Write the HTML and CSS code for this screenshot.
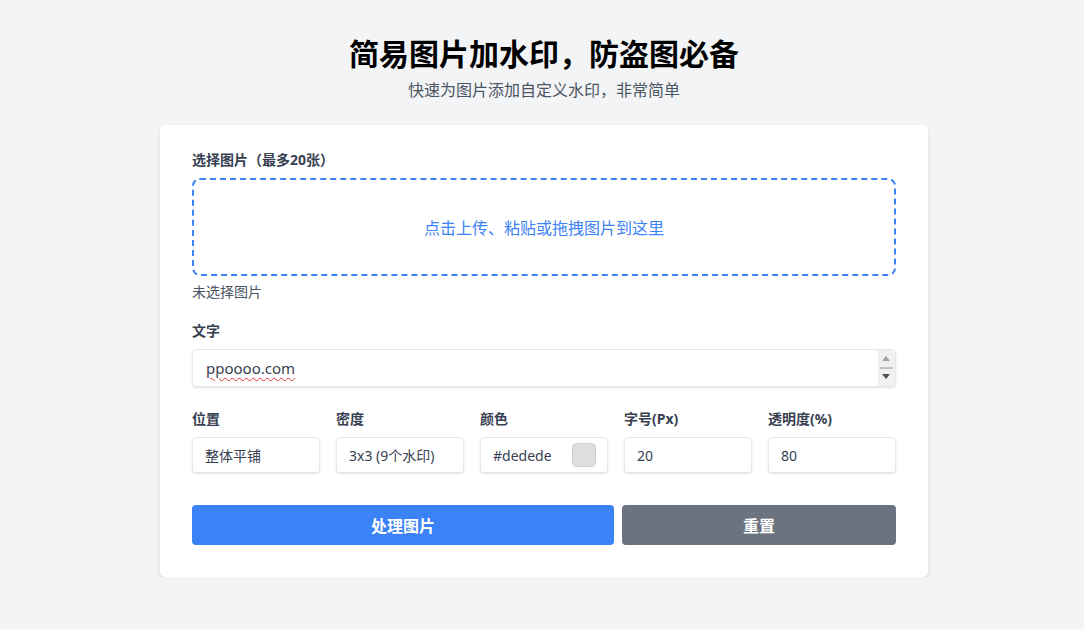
FILE: index.html
```html
<!DOCTYPE html>
<html lang="zh-CN">
<head>
<meta charset="utf-8">
<title>简易图片加水印</title>
<link rel="stylesheet" href="styles.css">
</head>
<body>
<div class="page">
  <h1 class="title">简易图片加水印，防盗图必备</h1>
  <p class="subtitle">快速为图片添加自定义水印，非常简单</p>
  <div class="card">
    <div class="label">选择图片（最多20张）</div>
    <div class="drop">点击上传、粘贴或拖拽图片到这里</div>
    <div class="status">未选择图片</div>

    <div class="label label-gap">文字</div>
    <div class="textbox">
      <span class="textval">ppoooo.com</span>
      <div class="scroll">
        <span class="arrow-up"></span>
        <span class="thumb"></span>
        <span class="arrow-down"></span>
      </div>
    </div>

    <div class="fields">
      <div class="field">
        <div class="label">位置</div>
        <div class="input">整体平铺</div>
      </div>
      <div class="field">
        <div class="label">密度</div>
        <div class="input">3x3 (9个水印)</div>
      </div>
      <div class="field">
        <div class="label">颜色</div>
        <div class="input input-color">#dedede<span class="swatch"></span></div>
      </div>
      <div class="field">
        <div class="label">字号(Px)</div>
        <div class="input">20</div>
      </div>
      <div class="field">
        <div class="label">透明度(%)</div>
        <div class="input">80</div>
      </div>
    </div>

    <div class="actions">
      <button class="btn btn-primary">处理图片</button>
      <button class="btn btn-secondary">重置</button>
    </div>
  </div>
</div>
</body>
</html>
```

FILE: styles.css
```css
* { box-sizing: border-box; }
html, body { margin: 0; padding: 0; }
body {
  background: #f3f4f6;
  font-family: "Noto Sans", "Noto Sans CJK SC", sans-serif;
  color: #374151;
}
.page {
  width: 772px;
  margin: 0 auto;
  padding-top: 34px;
  padding-left: 4px;
}
.title {
  margin: 0;
  font-size: 30px;
  line-height: 36px;
  font-weight: 700;
  color: #000;
  text-align: center;
  font-family: "Noto Sans CJK SC", sans-serif;
}
.subtitle {
  margin: 7px 0 0;
  font-size: 16px;
  line-height: 24px;
  color: #4b5563;
  text-align: center;
  font-family: "Noto Sans CJK SC", sans-serif;
}
.card {
  margin-top: 24px;
  background: #fff;
  border-radius: 6px;
  box-shadow: 0 4px 6px -1px rgba(0,0,0,0.1), 0 2px 4px -2px rgba(0,0,0,0.1);
  padding: 25px 32px 32px;
}
.label {
  font-size: 14px;
  line-height: 20px;
  font-weight: 700;
  color: #374151;
  margin-bottom: 8px;
  font-family: "Noto Sans", "Noto Sans CJK SC", sans-serif;
}
.label-gap { margin-top: 20px; }
.drop {
  height: 98px;
  border: 2px dashed #3b82f6;
  border-radius: 8px;
  display: flex;
  align-items: center;
  justify-content: center;
  color: #3b82f6;
  font-size: 16px;
  font-family: "Noto Sans CJK SC", sans-serif;
}
.status {
  margin-top: 5px;
  font-size: 14px;
  line-height: 20px;
  color: #4b5563;
  font-family: "Noto Sans CJK SC", sans-serif;
}
.textbox {
  position: relative;
  height: 38px;
  border: 1px solid #e5e7eb;
  border-radius: 4px;
  box-shadow: 0 1px 2px rgba(0,0,0,0.12);
  display: flex;
  align-items: center;
  padding-left: 13px;
}
.textval {
  font-size: 15px;
  color: #374151;
  text-decoration: underline wavy #e53935;
  text-decoration-thickness: 1px;
  text-underline-offset: 3px;
}
.scroll {
  position: absolute;
  right: 0;
  top: 0;
  bottom: 0;
  width: 17px;
  background: #f1f1f1;
  border-radius: 0 4px 4px 0;
}
.arrow-up {
  position: absolute;
  left: 4px;
  top: 6px;
  width: 0; height: 0;
  border-left: 4px solid transparent;
  border-right: 4px solid transparent;
  border-bottom: 5px solid #a3a3a3;
}
.thumb {
  position: absolute;
  left: 2px;
  right: 2px;
  top: 17px;
  height: 2px;
  background: #c1c1c1;
}
.arrow-down {
  position: absolute;
  left: 4px;
  bottom: 7px;
  width: 0; height: 0;
  border-left: 4px solid transparent;
  border-right: 4px solid transparent;
  border-top: 5px solid #505050;
}
.fields {
  margin-top: 22px;
  display: grid;
  grid-template-columns: repeat(5, 1fr);
  gap: 16px;
}
.input {
  height: 36px;
  border: 1px solid #e5e7eb;
  border-radius: 4px;
  box-shadow: 0 1px 2px rgba(0,0,0,0.12);
  display: flex;
  align-items: center;
  padding: 0 12px;
  font-size: 14px;
  color: #374151;
  font-family: "Noto Sans", "Noto Sans CJK SC", sans-serif;
}
.input-color { justify-content: space-between; padding-right: 11px; }
.swatch {
  width: 24px;
  height: 24px;
  border-radius: 4px;
  background: #dedede;
  border: 1px solid #cfcfcf;
}
.actions {
  margin-top: 32px;
  display: flex;
  gap: 8px;
}
.btn {
  height: 40px;
  border: none;
  border-radius: 4px;
  color: #fff;
  font-size: 16px;
  font-weight: 700;
  font-family: "Noto Sans CJK SC", sans-serif;
  cursor: pointer;
}
.btn-primary { flex: 1; background: #3b82f6; }
.btn-secondary { width: 274px; background: #6b7280; }
```
